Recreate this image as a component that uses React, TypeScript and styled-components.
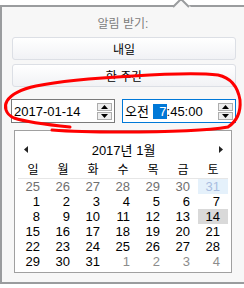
import styled, { createGlobalStyle } from "styled-components";

const GlobalStyle = createGlobalStyle`
  body {
    margin: 0;
    background: #ffffff;
    font-family: "Liberation Sans", "Noto Sans CJK KR", sans-serif;
  }
`;

const weekdays = ["일", "월", "화", "수", "목", "금", "토"];

type Kind = "prev" | "cur" | "next" | "hover" | "selected";

const days: { n: number; kind: Kind }[] = [
  ...[25, 26, 27, 28, 29, 30].map((n) => ({ n, kind: "prev" as Kind })),
  { n: 31, kind: "hover" },
  ...Array.from({ length: 31 }, (_, i) => ({
    n: i + 1,
    kind: (i + 1 === 14 ? "selected" : "cur") as Kind,
  })),
  ...[1, 2, 3, 4].map((n) => ({ n, kind: "next" as Kind })),
];

function Spinner() {
  return (
    <SpinBox>
      <SpinButton>
        <svg width="7" height="4" viewBox="0 0 7 4">
          <path d="M3.5 0 L7 4 L0 4 Z" fill="#000" />
        </svg>
      </SpinButton>
      <SpinButton>
        <svg width="7" height="4" viewBox="0 0 7 4">
          <path d="M0 0 L7 0 L3.5 4 Z" fill="#000" />
        </svg>
      </SpinButton>
    </SpinBox>
  );
}

function App() {
  return (
    <Page>
      <GlobalStyle />
      <Panel>
        <Notch width="24" height="9" viewBox="0 0 24 9">
          <path d="M2 8 L12 -1 L22 8 Z" fill="#f7f7f7" />
          <polyline points="3,7 10,0 12,0 19,7" fill="none" stroke="#9a9c9e" strokeWidth="2" />
        </Notch>
        <Title>알림 받기:</Title>
        <ButtonStack>
          <Choice>내일</Choice>
          <Choice>한 주간</Choice>
        </ButtonStack>
        <InputRow>
          <Field $width={104}>
            <FieldText>2017-01-14</FieldText>
            <Spinner />
          </Field>
          <Field $width={114} $focused>
            <FieldText>
              오전 <Selected>7</Selected>:45:00
            </FieldText>
            <Spinner />
          </Field>
        </InputRow>
        <Calendar>
          <CalNav>
            <svg width="4" height="7" viewBox="0 0 4 7">
              <path d="M4 0 L0 3.5 L4 7 Z" fill="#222" />
            </svg>
            <CalTitle>2017년 1월</CalTitle>
            <svg width="4" height="7" viewBox="0 0 4 7">
              <path d="M0 0 L4 3.5 L0 7 Z" fill="#222" />
            </svg>
          </CalNav>
          <WeekRow>
            {weekdays.map((w) => (
              <WeekDay key={w}>{w}</WeekDay>
            ))}
          </WeekRow>
          <DayGrid>
            {days.map((d, i) => (
              <Day key={i} $kind={d.kind}>
                {d.n}
              </Day>
            ))}
          </DayGrid>
        </Calendar>
      </Panel>
      <Scribble width="244" height="288" viewBox="0 0 244 288">
        <path
          d="M70 127 C 50 125, 26 122, 14 118 C 5 114, 4 106, 7 101 C 12 93, 22 89, 36 86 C 60 81, 95 78, 133 76 C 165 74, 200 73, 218 75 C 232 78, 238 88, 240 100 C 241 112, 237 121, 228 127 C 205 131, 160 132, 120 132 C 90 132, 65 131, 52 130"
          fill="none"
          stroke="#ff0000"
          strokeWidth="3"
          strokeLinecap="round"
        />
      </Scribble>
    </Page>
  );
}

const Page = styled.div`
  position: relative;
  width: 244px;
  height: 288px;
  padding-top: 5px;
  box-sizing: border-box;
  overflow: hidden;
`;

const Panel = styled.div`
  position: relative;
  height: 279px;
  box-sizing: border-box;
  background: #f7f7f7;
  border: 2px solid #9a9c9e;
  border-right: none;
`;

const Notch = styled.svg`
  position: absolute;
  top: -7px;
  left: 168px;
  overflow: visible;
`;

const Scribble = styled.svg`
  position: absolute;
  top: 0;
  left: 0;
  pointer-events: none;
`;

const Title = styled.div`
  height: 30px;
  display: flex;
  align-items: center;
  justify-content: center;
  font-size: 12px;
  color: #7d7d7d;
`;

const ButtonStack = styled.div`
  display: flex;
  flex-direction: column;
  gap: 4px;
  margin: 0 8px 0 10px;
`;

const Choice = styled.div`
  height: 23px;
  box-sizing: border-box;
  display: flex;
  align-items: center;
  justify-content: center;
  border: 1px solid #dcdfe5;
  border-radius: 3px;
  background: linear-gradient(#ffffff, #f1f2f5);
  font-size: 12px;
  color: #000;
`;

const InputRow = styled.div`
  display: flex;
  gap: 7px;
  margin-top: 12px;
  padding-left: 9px;
`;

const Field = styled.div<{ $width: number; $focused?: boolean }>`
  width: ${(p) => p.$width}px;
  height: 24px;
  box-sizing: border-box;
  display: flex;
  align-items: center;
  padding: 0 2px 0 2px;
  background: #fff;
  border: 1px solid ${(p) => (p.$focused ? "#0078d7" : "#7a7a7a")};
`;

const FieldText = styled.div`
  flex: 1;
  font-size: 13px;
  line-height: 15px;
  color: #000;
  white-space: pre;
`;

const Selected = styled.span`
  display: inline-block;
  width: 14px;
  text-align: right;
  background: #0078d7;
  color: #fff;
`;

const SpinBox = styled.div`
  display: flex;
  flex-direction: column;
  gap: 1px;
`;

const SpinButton = styled.div`
  width: 15px;
  height: 8px;
  box-sizing: border-box;
  display: flex;
  align-items: center;
  justify-content: center;
  border: 1px solid #adadad;
  background: #eeeeee;
`;

const Calendar = styled.div`
  width: 218px;
  height: 143px;
  box-sizing: border-box;
  margin: 7px 0 0 12px;
  padding: 0 3px 3px;
  background: #fff;
  border: 1px solid #a0a0a0;
`;

const CalNav = styled.div`
  height: 28px;
  margin-top: 4px;
  display: flex;
  align-items: center;
  justify-content: space-between;
  padding: 0 5px 0 6px;
`;

const CalTitle = styled.div`
  font-size: 13px;
  color: #000;
`;

const WeekRow = styled.div`
  display: grid;
  grid-template-columns: repeat(7, 30px);
  height: 15px;
  align-items: center;
  border-bottom: 1px solid #e6e6e6;
`;

const WeekDay = styled.div`
  text-align: center;
  font-size: 12px;
  line-height: 15px;
  color: #000;
`;

const DayGrid = styled.div`
  display: grid;
  grid-template-columns: repeat(7, 30px);
  grid-auto-rows: 15px;
`;

const dayColors: Record<Kind, { fg: string; bg: string }> = {
  prev: { fg: "#6f6f6f", bg: "transparent" },
  cur: { fg: "#000", bg: "transparent" },
  next: { fg: "#8c8c8c", bg: "transparent" },
  hover: { fg: "#a9bde0", bg: "#e5f1fb" },
  selected: { fg: "#000", bg: "#d9d9d9" },
};

const Day = styled.div<{ $kind: Kind }>`
  text-align: right;
  padding-right: 8px;
  font-size: 13px;
  line-height: 15px;
  color: ${(p) => dayColors[p.$kind].fg};
  background: ${(p) => dayColors[p.$kind].bg};
`;

export default App;
